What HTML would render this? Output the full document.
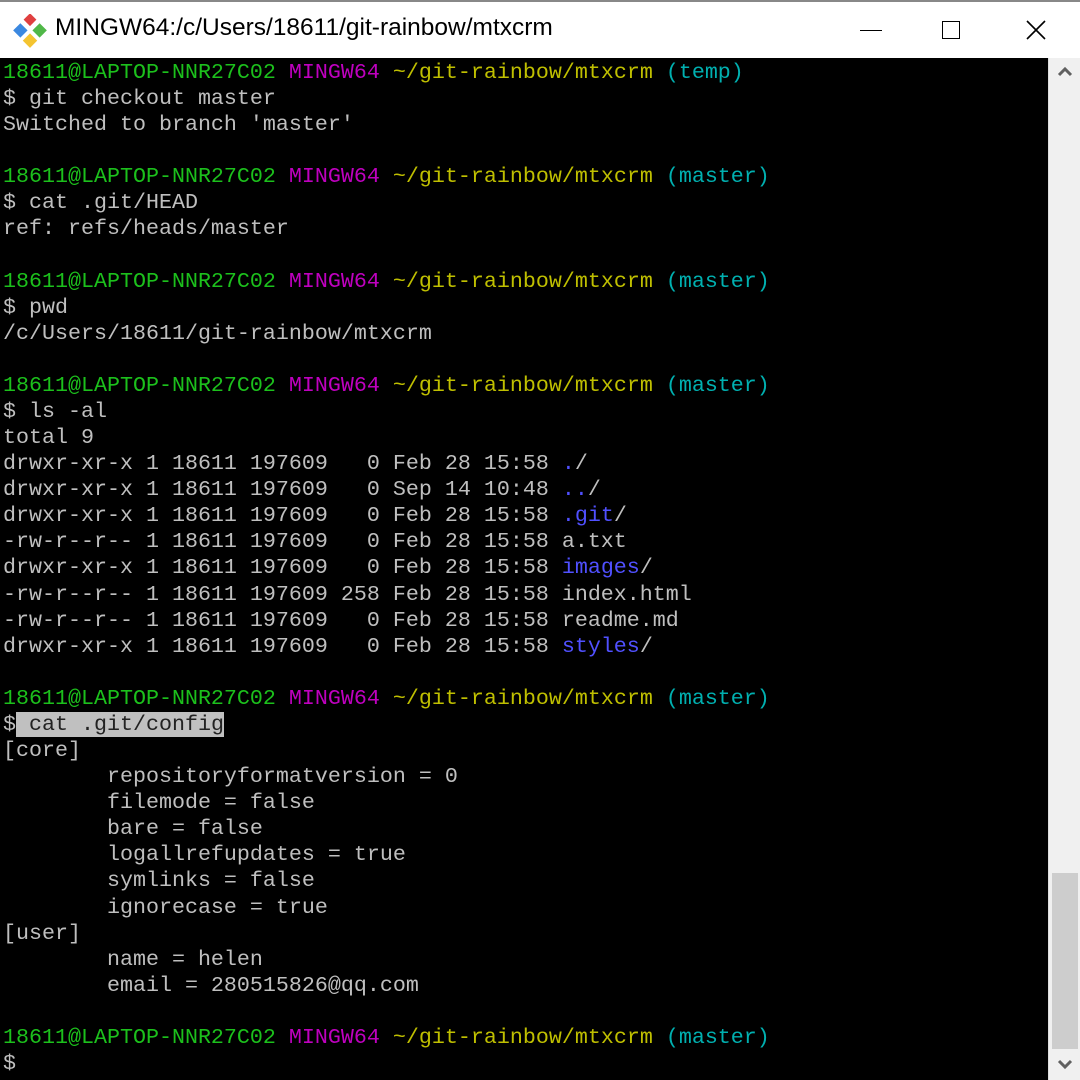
<!DOCTYPE html>
<html><head><meta charset="utf-8"><style>
html,body{margin:0;padding:0;width:1080px;height:1080px;overflow:hidden;background:#fff}
#title{position:absolute;left:0;top:0;width:1080px;height:57px;background:#fff;border-top:2px solid #888;box-sizing:border-box}
#title .t{position:absolute;left:55px;top:12px;font:24.5px "Liberation Sans",sans-serif;color:#000}
#term{position:absolute;left:0;top:58px;width:1048px;height:1022px;background:#000}
#sb{position:absolute;left:1048px;top:58px;width:32px;height:1022px;background:#f0f0f0;border-left:1px solid #ddd;box-sizing:border-box}
#thumb{position:absolute;left:3px;top:815px;width:26px;height:176px;background:#cdcdcd}
pre{position:absolute;left:3px;top:60px;margin:0;font:21.67px/26.08px "Liberation Mono",monospace;color:#bfbfbf;white-space:pre}
.g{color:#1cc01c}.m{color:#bf00bf}.y{color:#bfbf00}.c{color:#00b0b0}.b{color:#5050ff}
.sel{background:#c0c0c0;color:#222}
</style></head><body>
<div id="title">
<svg style="position:absolute;left:13px;top:12px" width="34" height="34" viewBox="0 0 30 30">
<rect x="11" y="1" width="8" height="8" fill="#e04040" transform="rotate(45 15 5)"/>
<rect x="2" y="10" width="9" height="9" fill="#3b88e0" transform="rotate(45 6.5 14.5)"/>
<rect x="19" y="10" width="9" height="9" fill="#50b848" transform="rotate(45 23.5 14.5)"/>
<rect x="10.5" y="19" width="9" height="9" fill="#f4c430" transform="rotate(45 15 23.5)"/>
</svg>
<div class="t">MINGW64:/c/Users/18611/git-rainbow/mtxcrm</div>
<div style="position:absolute;left:860px;top:28px;width:22px;height:1px;background:#000"></div>
<div style="position:absolute;left:942px;top:19px;width:16px;height:16px;border:1.5px solid #000"></div>
<svg style="position:absolute;left:1025px;top:17px" width="22" height="22"><path d="M2 2L20 20M20 2L2 20" stroke="#000" stroke-width="1.6"/></svg>
</div>
<div id="term"></div>
<div id="sb"><svg style="position:absolute;left:8px;top:8px" width="16" height="12"><path d="M2 9L8 3L14 9" stroke="#606060" stroke-width="3" fill="none"/></svg>
<div id="thumb"></div>
<svg style="position:absolute;left:8px;top:1000px" width="16" height="12"><path d="M2 3L8 9L14 3" stroke="#606060" stroke-width="3" fill="none"/></svg></div>
<pre><span class="g">18611@LAPTOP-NNR27C02</span> <span class="m">MINGW64</span> <span class="y">~/git-rainbow/mtxcrm</span> <span class="c">(temp)</span>
$ git checkout master
Switched to branch 'master'

<span class="g">18611@LAPTOP-NNR27C02</span> <span class="m">MINGW64</span> <span class="y">~/git-rainbow/mtxcrm</span> <span class="c">(master)</span>
$ cat .git/HEAD
ref: refs/heads/master

<span class="g">18611@LAPTOP-NNR27C02</span> <span class="m">MINGW64</span> <span class="y">~/git-rainbow/mtxcrm</span> <span class="c">(master)</span>
$ pwd
/c/Users/18611/git-rainbow/mtxcrm

<span class="g">18611@LAPTOP-NNR27C02</span> <span class="m">MINGW64</span> <span class="y">~/git-rainbow/mtxcrm</span> <span class="c">(master)</span>
$ ls -al
total 9
drwxr-xr-x 1 18611 197609   0 Feb 28 15:58 <span class="b">.</span>/
drwxr-xr-x 1 18611 197609   0 Sep 14 10:48 <span class="b">..</span>/
drwxr-xr-x 1 18611 197609   0 Feb 28 15:58 <span class="b">.git</span>/
-rw-r--r-- 1 18611 197609   0 Feb 28 15:58 a.txt
drwxr-xr-x 1 18611 197609   0 Feb 28 15:58 <span class="b">images</span>/
-rw-r--r-- 1 18611 197609 258 Feb 28 15:58 index.html
-rw-r--r-- 1 18611 197609   0 Feb 28 15:58 readme.md
drwxr-xr-x 1 18611 197609   0 Feb 28 15:58 <span class="b">styles</span>/

<span class="g">18611@LAPTOP-NNR27C02</span> <span class="m">MINGW64</span> <span class="y">~/git-rainbow/mtxcrm</span> <span class="c">(master)</span>
$<span class="sel"> cat .git/config</span>
[core]
        repositoryformatversion = 0
        filemode = false
        bare = false
        logallrefupdates = true
        symlinks = false
        ignorecase = true
[user]
        name = helen
        email = 280515826@qq.com

<span class="g">18611@LAPTOP-NNR27C02</span> <span class="m">MINGW64</span> <span class="y">~/git-rainbow/mtxcrm</span> <span class="c">(master)</span>
$</pre>
</body></html>
